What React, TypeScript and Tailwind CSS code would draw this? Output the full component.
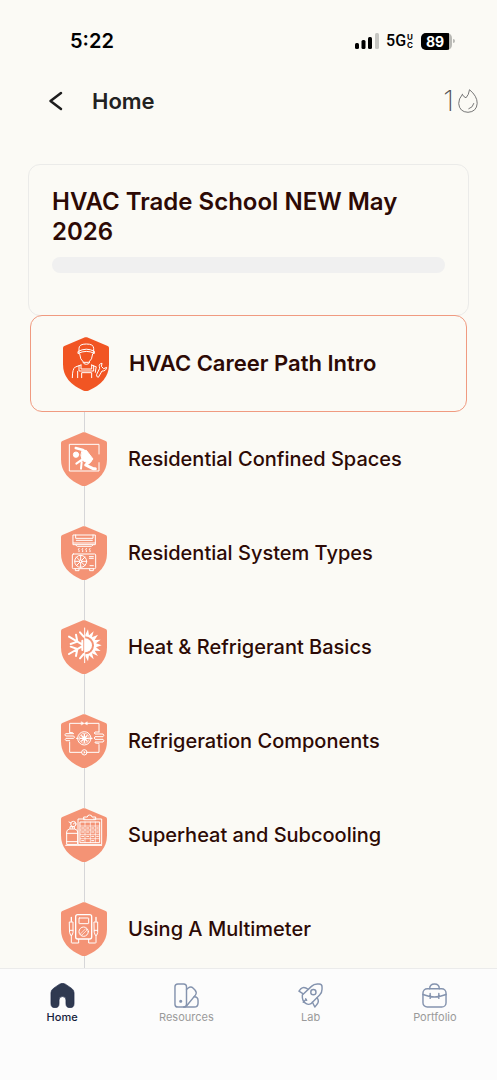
import React from 'react';

interface Lesson {
  title: string;
  icon: React.ReactNode;
}

const CareerIcon = () => (
  <>
    <path d="M48 50V34q0-13 22-13t22 13v16" />
    <path d="M46 43q24-13 48 0v6q-24-12-48 0z" />
    <path d="M50 51q1 17 12 25h15q11-8 12-25" />
    <path d="M60 76q2 6 10 6t10-6" />
    <path d="M28 122q0-27 9-32l17-6M86 84l14 6M44 122v-19" />
    <path d="M48 86v16h44V86M54 84v12h32V84M56 122v-15h30v15" />
    <path d="M116 79q-9 1-7 10l1 5-9 18q-2 8 5 9l11-19q12 1 14-11l-9 4-6-6z" />
    <path d="M99 92l-2 14" />
  </>
);

const ConfinedIcon = () => (
  <>
    <path d="M114 66V37H25v80h89V92" />
    <circle cx="45" cy="68" r="8" fill="#fff" />
    <path d="M44 48l22 6 8 6" strokeWidth="7" />
    <path d="M64 56l12-1 20 26-12 14-20-10-4-14z" fill="#fff" />
    <path d="M64 82L46 95M62 90l-2 20" strokeWidth="6" />
    <path d="M88 86L74 99l22 11h7" strokeWidth="9" />
  </>
);

const SystemIcon = () => (
  <>
    <path d="M37 27h66v29H37zM37 51h66M44 27v10h52V27M46 43h48M44 57l5 4h42l5-4" />
    <path d="M54 67q-4 3 0 6v4M65 67q-4 3 0 6v4M76 67q-4 3 0 6v4M87 67q-4 3 0 6v4" />
    <rect x="34" y="84" width="70" height="44" rx="3" />
    <circle cx="59" cy="106" r="18" />
    <circle cx="59" cy="106" r="4" />
    <path d="M59 88v14M59 110v14M41 106h14M63 106h14M46 93l10 10M62 109l10 10M72 93L62 103M56 109l-10 10" />
    <path d="M85 92h12M85 97h12M87 119h10M43 129v5h11v-5M86 129v5h11v-5" />
  </>
);

const HeatIcon = () => (
  <>
    <path
      d="M73 44l8-16 3 18 14-12-5 18 18-8-10 16 18-1-14 11 17 6-17 6 14 11-18-1 10 16-18-8 5 18-14-12-3 18-8-16z"
      fill="#fff"
      stroke="none"
    />
    <path d="M72 49a27 27 0 0 1 0 54z" fill="#f49375" stroke="none" />
    <path d="M72 55a21 21 0 0 1 0 42z" fill="#fff" stroke="none" />
    <path d="M71 24v104" strokeWidth="3" />
    <path
      d="M63 73L24 50M63 79l-39 23M49 65l-4-21M49 65l-20 7M49 87l-4 21M49 87l-20-7M68 50L57 37M68 102l-11 13M64 62v28"
      strokeWidth="6"
    />
  </>
);

const RefrigerationIcon = () => (
  <>
    <path d="M61 28H26v27M79 28h35v26M26 84v31h36M79 115h35V92" />
    <path d="M61 23l18 10V23L61 33z" fill="#fff" strokeWidth="1" />
    <circle cx="70" cy="115" r="8" />
    <path d="M68 110l6 5-6 5z" fill="#fff" stroke="none" />
    <path d="M26 55q14 1 12 4H14q-5 4 0 7h24q5 4 0 7H15q-5 4 0 7h11" />
    <path d="M114 54h-12q-4 3 0 6h24q5 4 0 8h-24q-4 4 0 8h24q5 4 0 8h-24q-3 4 12 4" />
    <circle cx="70" cy="73" r="20" />
    <circle cx="70" cy="73" r="15" strokeWidth="2" />
    <path d="M70 61v24M58 73h24M62 65l16 16M78 65L62 81" strokeWidth="4" />
    <path d="M47 73h4M89 73h4" strokeWidth="4" />
  </>
);

const SuperheatIcon = () => (
  <>
    <path d="M72 33H51v77h71V33H98" />
    <path d="M68 34v-7h11q0-6 7-6t7 6h11v7z" />
    <path d="M58 42h58v62H58z" />
    <path d="M72 42v62M88 42v62M103 42v62M58 54h58M58 66h58M58 79h58M58 92h58" strokeWidth="2" />
    <path d="M62 60h6M77 60h6M92 60h6M107 60h5M62 72h6M77 72h6M92 72h6M107 72h5M62 85h6M77 85h6M92 85h6M107 85h5M62 98h6M92 98h6" />
    <path d="M17 108V72q0-7 9-9h15q9 2 9 9v36zM17 76h33M17 101h33M27 62v-6h13v6M14 112h108" />
    <circle cx="37" cy="48" r="8" />
    <path d="M37 48l5-4M24 42l6 3M34 56v5" />
  </>
);

const MultimeterIcon = () => (
  <>
    <rect x="44" y="38" width="48" height="73" rx="6" strokeWidth="4" />
    <rect x="54" y="48" width="29" height="17" rx="1" />
    <circle cx="68" cy="89" r="14" />
    <path d="M59 95l15-15 4 4-15 15z" strokeWidth="2" />
    <path d="M31 46v12M105 46v12" strokeWidth="4" />
    <path d="M26 60h10v32l-3 8h-4l-3-8zM100 60h10v32l-3 8h-4l-3-8zM26 85h10M100 85h10" />
    <path d="M31 100v22q0 1 2 1h20v-11M105 100v22q0 1-2 1H83v-11" />
  </>
);

const LESSONS: Lesson[] = [
  { title: 'Residential Confined Spaces', icon: <ConfinedIcon /> },
  { title: 'Residential System Types', icon: <SystemIcon /> },
  { title: 'Heat & Refrigerant Basics', icon: <HeatIcon /> },
  { title: 'Refrigeration Components', icon: <RefrigerationIcon /> },
  { title: 'Superheat and Subcooling', icon: <SuperheatIcon /> },
  { title: 'Using A Multimeter', icon: <MultimeterIcon /> },
];

const Shield: React.FC<{ active?: boolean; children: React.ReactNode }> = ({ active = false, children }) => (
  <svg viewBox="0 0 138 162" className="w-[46px] h-[54px] shrink-0" aria-hidden="true">
    <path
      d="M66 1q3-1 6 0l62 26q4 2 4 6v49q0 53-62 79-7 2-14 0Q0 135 0 82V33q0-4 4-6z"
      fill={active ? '#f15523' : '#f49375'}
    />
    <g fill="none" stroke="#fff" strokeWidth="3" strokeLinecap="round" strokeLinejoin="round">
      {children}
    </g>
  </svg>
);

const HomeIcon = () => (
  <path
    d="M10 1.2q3-1.8 6 0l6.5 4.4q2.5 1.7 2.5 4.6v11.3a4.2 4.2 0 0 1-8.4 0v-3.8a3.6 3.6 0 0 0-7.2 0v3.8a4.2 4.2 0 0 1-8.4 0V10.2q0-2.9 2.5-4.6z"
    fill="#2f3950"
    stroke="#1e2948"
    strokeWidth="0.7"
  />
);

const ResourcesIcon = () => (
  <>
    <rect x="1" y="1" width="12" height="24" rx="3" />
    <path d="M13 6.8l1.8-1.6q2.7-2.2 5.2.2l1.8 1.8q2.4 2.6.4 5.4L13 24" />
    <path d="M21 14.2q4 0 4 4V21q0 4-4 4H10" />
    <circle cx="7" cy="19" r="0.9" fill="#8493ae" />
  </>
);

const LabIcon = () => (
  <>
    <path d="M4.5 12.5l9.5-9q2.5-2.5 6-2.5h2q3 0 3 3v2.5q0 3.5-2.5 6l-9 9q-2.5 1.5-5 0-4.5-2.5-4-9z" />
    <circle cx="16" cy="9.5" r="2.7" />
    <path d="M10.5 6.5Q6 3 3 6L1 8.5l4 2.5M20 15.5q2.5 4-.5 7l-2 2.5-2.5-5M5.5 20l3-3M8 16.5l1 1.5" />
  </>
);

const PortfolioIcon = () => (
  <>
    <rect x="1" y="6" width="24" height="19" rx="4.5" />
    <path d="M8 6q0-5 5-5t5 5M1 12q12 5 24 0M8.5 11v5M17.5 11v5" />
  </>
);

const TABS = [
  { label: 'Home', icon: <HomeIcon />, active: true },
  { label: 'Resources', icon: <ResourcesIcon />, active: false },
  { label: 'Lab', icon: <LabIcon />, active: false },
  { label: 'Portfolio', icon: <PortfolioIcon />, active: false },
];

const StatusBar = () => (
  <div className="h-20 pt-0.5 shrink-0 flex items-center justify-between pl-[70px] pr-[42px] text-black">
    <span className="text-xl font-semibold">5:22</span>
    <div className="flex items-center">
      <svg viewBox="0 0 25 16" className="w-[25px] h-4" aria-hidden="true">
        <rect x="0" y="10" width="4" height="6" rx="1.5" />
        <rect x="6.5" y="7" width="4" height="9" rx="1.5" />
        <rect x="13" y="4" width="4" height="12" rx="1.5" />
        <rect x="20" y="0" width="4" height="16" rx="1.5" fill="#c6c6c2" />
      </svg>
      <span className="ml-1.5 text-base leading-4 font-medium font-['Roboto',sans-serif]">5G</span>
      <span className="ml-px flex flex-col text-[8px] leading-[8px] font-bold">
        <span>U</span>
        <span>C</span>
      </span>
      <div className="ml-2 flex items-center gap-px">
        <div className="h-[17px] w-[31px] rounded-[5px] overflow-hidden bg-[#b9b9b5] flex">
          <span className="w-7 bg-black text-white text-sm leading-[17px] font-bold text-center">89</span>
        </div>
        <span className="w-0.5 h-1 rounded-r bg-[#b9b9b5]" />
      </div>
    </div>
  </div>
);

export default function App() {
  return (
    <div className="h-screen flex flex-col bg-[#fbfaf5] font-['Inter',sans-serif]">
      <StatusBar />

      <header className="shrink-0 h-[42px] pl-12 pr-[19px] flex items-center">
        <button type="button" aria-label="Back" className="w-4 h-6 flex items-center">
          <svg viewBox="0 0 16 20" className="w-4 h-5" fill="none" stroke="#1d1d1d" strokeWidth="2.5" strokeLinecap="round" strokeLinejoin="round">
            <path d="M13 2L2.5 10 13 18" />
          </svg>
        </button>
        <h1 className="ml-7 text-[22px] font-semibold text-[#222]">Home</h1>
        <div className="ml-auto flex items-center gap-1">
          <span className="text-[28px] leading-7 font-extralight text-[#555]">1</span>
          <svg viewBox="0 0 20 24" className="w-5 h-6" fill="none" stroke="#777" strokeWidth="1" strokeLinecap="round" strokeLinejoin="round" role="img" aria-label="Day streak">
            <path d="M4.3 5.5Q.5 10 .7 14.5q.7 8.5 9.3 8.8 8.7-.5 9.2-9Q19.2 7 11.5.7q-.7 5.3-3.5 8.1Q5.5 8 4.3 5.5z" />
            <path d="M15.8 14.5q-.8 4-5 5.3" />
          </svg>
        </div>
      </header>

      <main className="flex-1 min-h-0 overflow-y-auto [scrollbar-width:none] px-7 pt-[42px]">
        <section className="border border-[#ebebe9] rounded-xl px-[23px] pt-[22px] pb-[42px]">
          <h2 className="text-2xl leading-[30px] font-semibold text-[#2d0a05]">HVAC Trade School NEW May 2026</h2>
          <div className="mt-2.5 h-4 rounded-full bg-[#f0f0f0]" role="progressbar" aria-label="Course progress" aria-valuenow={0} />
        </section>

        <button type="button" className="-mt-px mx-auto w-[calc(100%-4px)] h-[97px] flex items-center border border-[#f09a80] rounded-xl pl-8 text-left">
          <Shield active><CareerIcon /></Shield>
          <span className="ml-5 text-[22px] font-semibold text-[#2d0a05]">HVAC Career Path Intro</span>
        </button>

        <ul className="pl-[33px]">
          {LESSONS.map((lesson) => (
            <li key={lesson.title}>
              <button type="button" className="w-full h-[94px] flex items-center gap-[21px] text-left">
                <span className="h-full flex flex-col items-center">
                  <span className="flex-1 w-px bg-[#d6d6d8]" />
                  <Shield>{lesson.icon}</Shield>
                  <span className="flex-1 w-px bg-[#d6d6d8]" />
                </span>
                <span className="text-xl font-medium text-[#2d0a05]">{lesson.title}</span>
              </button>
            </li>
          ))}
        </ul>
      </main>

      <nav className="shrink-0 h-28 grid grid-cols-4 bg-[#fcfcfc] border-t border-[#ebebeb]">
        {TABS.map((tab) => (
          <a key={tab.label} href="#" className="pt-3.5 flex flex-col items-center gap-0.5">
            <svg viewBox="0 0 26 26" className="w-[25px] h-[25px]" fill="none" stroke="#8493ae" strokeWidth="1.5" strokeLinecap="round" strokeLinejoin="round" aria-hidden="true">
              {tab.icon}
            </svg>
            <span className={tab.active ? 'text-[11px] leading-[14px] font-medium text-[#151d3b]' : 'text-[11px] leading-[14px] text-[#9a9a9a]'}>
              {tab.label}
            </span>
          </a>
        ))}
      </nav>
    </div>
  );
}
